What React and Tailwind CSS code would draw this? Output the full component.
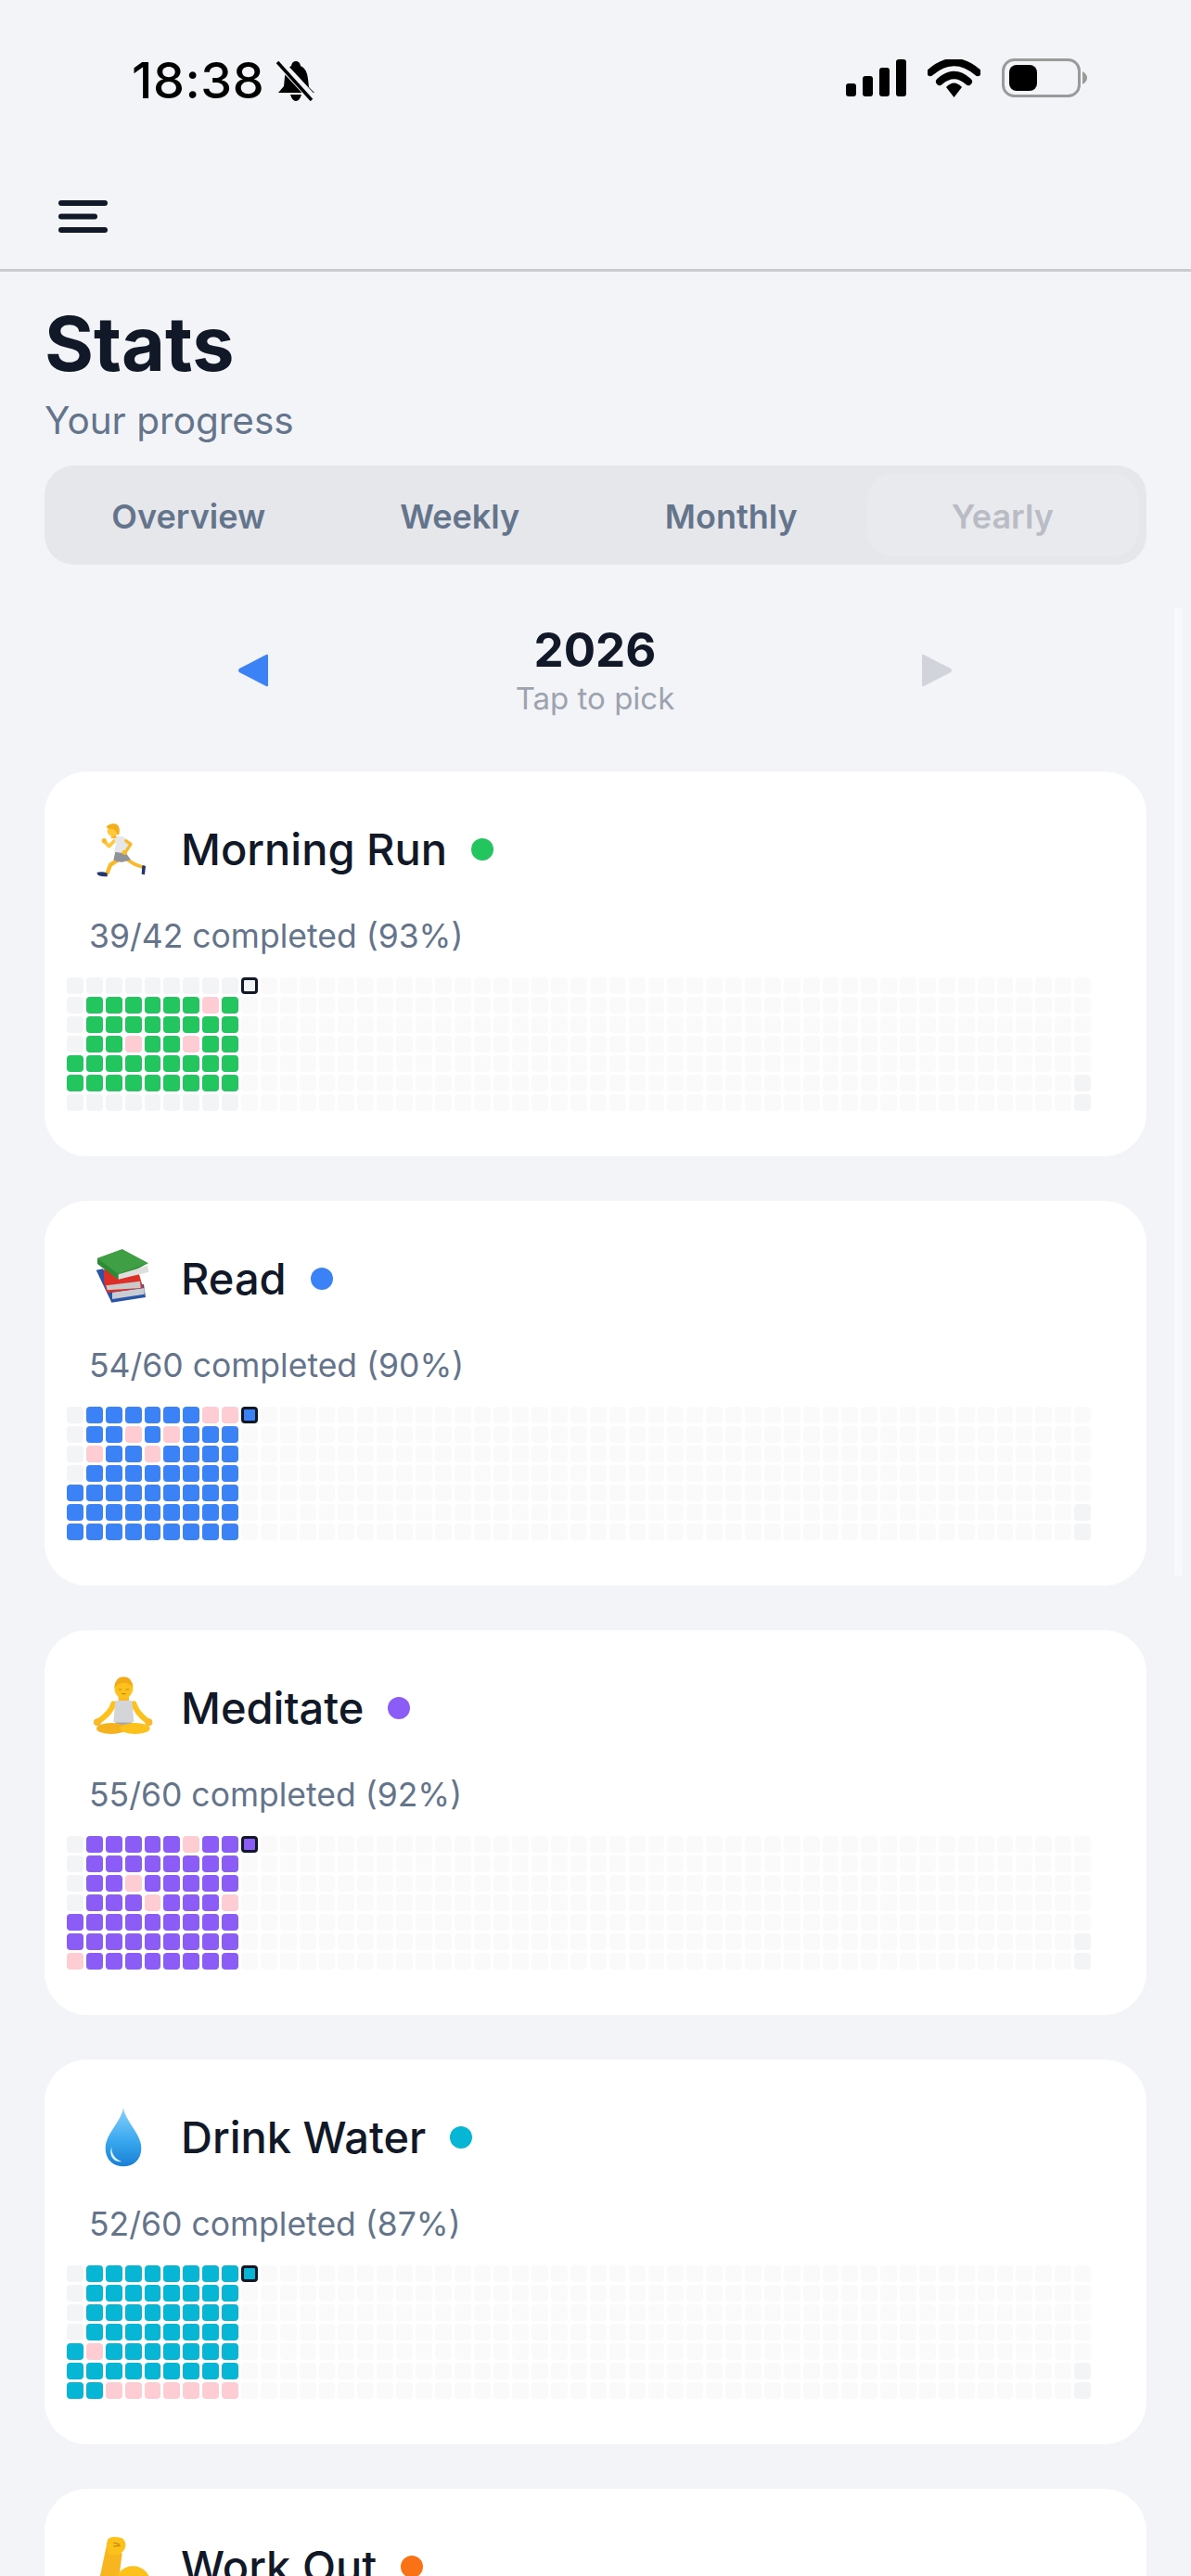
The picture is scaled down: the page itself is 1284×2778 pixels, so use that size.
import React from "react";

const RunnerEmoji = () => (
  <svg width="85" height="70" viewBox="0 0 255 210" className="block shrink-0 overflow-visible">
    <path d="M125 155 L102 170 L92 196" fill="none" stroke="#f9b92a" strokeWidth="13" strokeLinecap="round" strokeLinejoin="round" />
    <path d="M155 152 L180 168 L203 176" fill="none" stroke="#f9b92a" strokeWidth="11" strokeLinecap="round" strokeLinejoin="round" />
    <path d="M58 195 Q75 190 92 197 L92 208 Q72 208 62 203 Z" fill="#24356f" />
    <path d="M205 172 Q212 170 216 175 L213 202 L203 200 Z" fill="#24356f" />
    <path d="M122 84 L98 110 L82 94" fill="none" stroke="#ffc83d" strokeWidth="11" strokeLinecap="round" strokeLinejoin="round" />
    <circle cx="82" cy="92" r="8" fill="#f9b92a" />
    <path d="M112 82 Q128 72 146 80 L166 100 L152 122 L152 136 L114 130 L120 100 Z" fill="#e6e7e9" />
    <path d="M118 128 L154 134 L168 154 L140 161 L124 160 L112 154 Z" fill="#8f9297" />
    <path d="M152 92 L168 103 L150 130" fill="none" stroke="#f9b92a" strokeWidth="10" strokeLinecap="round" strokeLinejoin="round" />
    <circle cx="148" cy="130" r="8" fill="#f9b92a" />
    <rect x="104" y="62" width="17" height="22" fill="#f9b92a" />
    <ellipse cx="108" cy="60" rx="16" ry="17" fill="#ffc83d" />
    <path d="M88 48 Q100 34 122 38 Q136 48 130 72 L122 72 Q122 58 108 54 Q96 54 88 48 Z" fill="#f5ae1b" />
  </svg>
);

const BooksEmoji = () => (
  <svg width="85" height="70" viewBox="0 0 255 210" className="block shrink-0 overflow-visible">
    <path d="M56 92 L78 88 L112 150 L210 138 L216 180 L106 197 Z" fill="#2a54a8" />
    <path d="M108 164 L212 150 L212 170 L108 186 Z" fill="#c9ccd2" />
    <path d="M80 90 L195 106 L208 150 L92 166 L82 135 Z" fill="#dc2f27" />
    <path d="M88 142 L198 128 L200 150 L92 157 Z" fill="#c9c9c9" />
    <path d="M60 54 L140 25 L224 70 L126 122 L60 72 Z" fill="#2f8a36" />
    <path d="M60 54 L140 25 L224 70 L128 104 Z" fill="#3f9f44" />
    <path d="M128 106 L222 78 L226 98 L128 122 Z" fill="#dededc" />
  </svg>
);

const MeditateEmoji = () => (
  <svg width="85" height="70" viewBox="0 0 255 210" className="block shrink-0 overflow-visible">
    <g transform="translate(0 6)">
      <path d="M112 100 Q104 130 62 158" fill="none" stroke="#fcc21b" strokeWidth="18" strokeLinecap="round" />
      <path d="M178 100 Q186 130 224 158" fill="none" stroke="#fcc21b" strokeWidth="18" strokeLinecap="round" />
      <circle cx="60" cy="160" r="12" fill="#f9b92a" />
      <circle cx="226" cy="160" r="12" fill="#f9b92a" />
      <rect x="128" y="66" width="34" height="30" fill="#f9b92a" />
      <path d="M118 90 L172 90 L178 160 L112 160 Z" fill="#d4d5d8" />
      <path d="M118 160 L172 160 L172 176 L118 176 Z" fill="#a5a7ab" />
      <ellipse cx="105" cy="180" rx="48" ry="18" fill="#f5b11e" />
      <ellipse cx="182" cy="180" rx="48" ry="18" fill="#fcc21b" />
      <ellipse cx="145" cy="50" rx="30" ry="33" fill="#fcc21b" />
      <path d="M115 48 Q116 14 145 13 Q174 14 175 48 Q166 34 148 32 Q128 32 115 48 Z" fill="#f2ab17" />
      <path d="M128 54 H138 M152 54 H162" stroke="#9a6a10" strokeWidth="2" />
      <path d="M140 68 H150" stroke="#b27a14" strokeWidth="3" strokeLinecap="round" />
    </g>
  </svg>
);

const WaterEmoji = () => (
  <svg width="85" height="70" viewBox="0 0 255 210" className="block shrink-0 overflow-visible">
    <defs>
      <linearGradient id="dropFill" x1="0" y1="0" x2="0" y2="1">
        <stop offset="0" stopColor="#8ad2fa" />
        <stop offset="0.55" stopColor="#3aa9ef" />
        <stop offset="1" stopColor="#1a7fd6" />
      </linearGradient>
    </defs>
    <path d="M144 24 C150 68 202 108 202 155 C202 192 176 214 144 214 C112 214 86 192 86 155 C86 108 138 68 144 24 Z" fill="url(#dropFill)" />
    <path d="M106 150 C104 175 120 192 138 198 C118 202 94 182 106 150 Z" fill="#e2f5ff" />
  </svg>
);

const ArmEmoji = () => (
  <svg width="85" height="70" viewBox="0 0 255 210" className="block shrink-0 overflow-visible">
    <path d="M92 40 L140 78 L128 170 L56 210 Z" fill="#f7b51f" />
    <circle cx="175" cy="176" r="58" fill="#fcc21b" />
    <path d="M94 30 Q112 18 140 28 Q152 36 151 52 Q150 66 138 74 Q116 90 94 76 Q86 52 94 30 Z" fill="#fcc21b" />
    <path d="M112 42 L132 48 M112 54 L134 52" stroke="#b9770f" strokeWidth="3" />
  </svg>
);

const done = {
  green: "bg-[#22c55e]",
  blue: "bg-[#3b82f6]",
  violet: "bg-[#8b5cf6]",
  cyan: "bg-[#06b6d4]",
};

const habits = [
  {
    name: "Morning Run",
    Emoji: RunnerEmoji,
    dot: "bg-[#22c55e]",
    color: "green",
    stat: "39/42 completed (93%)",
    rows: [
      "........." + "T",
      ".xxxxxxpx",
      ".xxxxxxxx",
      ".xxpxxpxx",
      "xxxxxxxxx",
      "xxxxxxxxx",
      ".........",
    ],
    todayDone: false,
  },
  {
    name: "Read",
    Emoji: BooksEmoji,
    dot: "bg-[#3b82f6]",
    color: "blue",
    stat: "54/60 completed (90%)",
    rows: [
      ".xxxxxxpp" + "T",
      ".xxpxpxxx",
      ".pxxpxxxx",
      ".xxxxxxxx",
      "xxxxxxxxx",
      "xxxxxxxxx",
      "xxxxxxxxx",
    ],
    todayDone: true,
  },
  {
    name: "Meditate",
    Emoji: MeditateEmoji,
    dot: "bg-[#8b5cf6]",
    color: "violet",
    stat: "55/60 completed (92%)",
    rows: [
      ".xxxxxpxx" + "T",
      ".xxxxxxxx",
      ".xxpxxxxx",
      ".xxxpxxxp",
      "xxxxxxxxx",
      "xxxxxxxxx",
      "pxxxxxxxx",
    ],
    todayDone: true,
  },
  {
    name: "Drink Water",
    Emoji: WaterEmoji,
    dot: "bg-[#06b6d4]",
    color: "cyan",
    stat: "52/60 completed (87%)",
    rows: [
      ".xxxxxxxx" + "T",
      ".xxxxxxxx",
      ".xxxxxxxx",
      ".xxxxxxxx",
      "xpxxxxxxx",
      "xxxxxxxxx",
      "xxppppppp",
    ],
    todayDone: true,
  },
  {
    name: "Work Out",
    Emoji: ArmEmoji,
    dot: "bg-[#f97316]",
    color: "green",
    stat: "",
    rows: [],
    todayDone: false,
  },
];

function cellClass(habit, col, row) {
  const ch = habit.rows[row]?.[col];
  if (ch === "T") {
    return habit.todayDone
      ? `${done[habit.color]} border-[3px] border-[#111827]`
      : "bg-[#f3f4f6] border-[3px] border-[#111827]";
  }
  if (ch === "x") return done[habit.color];
  if (ch === "p") return "bg-[#fecdd3]";
  if (ch === ".") return "bg-[#f3f4f6]";
  if (col === 52 && row >= 5) return "bg-[#f3f4f6]";
  return "bg-[#fafafa]";
}

function Heatmap({ habit }) {
  const cells = [];
  for (let col = 0; col < 53; col++) {
    for (let row = 0; row < 7; row++) {
      cells.push(
        <div key={col + "-" + row} className={"h-[18px] rounded-[4px] " + cellClass(habit, col, row)} />
      );
    }
  }
  return (
    <div className="mt-[22px] ml-[24px] w-[1104px] grid grid-flow-col grid-rows-7 grid-cols-[repeat(53,minmax(0,1fr))] gap-[3px]">
      {cells}
    </div>
  );
}

function HabitCard({ habit }) {
  const { Emoji } = habit;
  return (
    <div className="bg-white rounded-[46px] pt-[44px] pb-[49px]">
      <div className="flex items-center h-[70px] ml-[37px]">
        <Emoji />
        <span className="ml-[25px] pt-[10px] text-[47px] leading-[60px] font-[550] text-[#111827]">{habit.name}</span>
        <span className={"ml-[26px] mt-[10px] w-[24px] h-[24px] rounded-full " + habit.dot} />
      </div>
      <div className="mt-[42px] ml-[48px] text-[35.5px] leading-[44px] text-[#64748b]">{habit.stat}</div>
      <Heatmap habit={habit} />
    </div>
  );
}

const StatusIcons = () => (
  <div className="flex items-center">
    <svg width="65" height="40" viewBox="0 0 65 40" className="block">
      <rect x="0" y="26" width="11" height="14" rx="3" fill="#000" />
      <rect x="18" y="18" width="11" height="22" rx="3" fill="#000" />
      <rect x="36" y="9" width="11" height="31" rx="3" fill="#000" />
      <rect x="54" y="0" width="11" height="40" rx="3" fill="#000" />
    </svg>
    <svg width="57" height="41" viewBox="0 0 57 41" className="block ml-[23px]">
      <path d="M3 14 Q28.5 -8 54 14" fill="none" stroke="#000" strokeWidth="8" strokeLinecap="round" />
      <path d="M13 24 Q28.5 10 44 24" fill="none" stroke="#000" strokeWidth="8" strokeLinecap="round" />
      <path d="M20 30 Q28.5 21 37 30 L28.5 41 Z" fill="#000" />
    </svg>
    <svg width="92" height="42" viewBox="0 0 92 42" className="block ml-[23px]">
      <rect x="1.5" y="1.5" width="82" height="39" rx="12" fill="none" stroke="#9a9a9a" strokeWidth="3" />
      <rect x="8" y="7" width="30" height="28" rx="8" fill="#000" />
      <path d="M87 14 Q92 17 92 21 Q92 25 87 28 Z" fill="#9a9a9a" />
    </svg>
  </div>
);

const BellSlash = () => (
  <svg width="43" height="44" viewBox="0 0 43 44" className="block ml-[13px]">
    <path d="M21 1 Q25 1 26 6 Q33 9 34 20 L35 29 L41 35 L2 35 L8 28 L9 18 Q10 9 16 6 Q17 1 21 1 Z" fill="#000" />
    <path d="M15 37 H27 Q25 44 21 44 Q17 44 15 37 Z" fill="#000" />
    <path d="M2 1 L41 43" stroke="#f3f4f8" strokeWidth="9" />
    <path d="M1 2 L38 43" stroke="#000" strokeWidth="3.5" />
  </svg>
);

const Tab = ({ label, active }) => (
  <div
    className={
      "flex-1 flex items-center justify-center pt-[3px] rounded-[27px] text-[36px] font-semibold " +
      (active ? "bg-[#e9eaed] text-[#b9bcc4]" : "text-[#64748b]")
    }
  >
    {label}
  </div>
);

export default function App() {
  return (
    <div className="relative w-[1284px] h-[2778px] overflow-hidden bg-[#f3f4f8] font-['Inter',sans-serif]">
      <div className="h-[175px] pt-[63px] pl-[142px] pr-[112px] flex items-start justify-between">
        <div className="flex items-center h-[48px]">
          <span className="text-[54px] leading-[48px] font-medium tracking-[0.5px] text-black">18:38</span>
          <BellSlash />
        </div>
        <StatusIcons />
      </div>
      <div className="h-[118px] pl-[63px] pt-[2px] flex items-center border-b-[3px] border-[#c9cbd0]">
        <svg width="53" height="35" viewBox="0 0 53 35" className="block">
          <rect x="0" y="0" width="53" height="6" rx="3" fill="#111827" />
          <rect x="0" y="14.5" width="42" height="6" rx="3" fill="#111827" />
          <rect x="0" y="29" width="53" height="6" rx="3" fill="#111827" />
        </svg>
      </div>

      <div className="px-[48px]">
        <div className="pt-[28px] text-[81px] leading-[100px] font-bold text-[#111827]">Stats</div>
        <div className="mt-[8px] text-[40.5px] leading-[50px] text-[#64748b]">Your progress</div>

        <div className="mt-[23px] h-[107px] p-[9px] flex rounded-[32px] bg-[#e5e7eb]">
          <Tab label="Overview" />
          <Tab label="Weekly" />
          <Tab label="Monthly" />
          <Tab label="Yearly" active />
        </div>

        <div className="mt-[62px] h-[104px] pl-[208px] pr-[209px] flex items-center justify-between">
          <svg width="34" height="36" viewBox="0 0 34 36" className="block">
            <path d="M33 2 Q33 0 31 1 L2 16 Q0 18 2 20 L31 35 Q33 36 33 34 Z" fill="#3b82f6" />
          </svg>
          <div className="flex flex-col items-center">
            <div className="text-[51px] leading-[60px] font-bold text-[#111827]">2026</div>
            <div className="text-[33px] leading-[44px] text-[#9ca3af]">Tap to pick</div>
          </div>
          <svg width="34" height="36" viewBox="0 0 34 36" className="block">
            <path d="M1 2 Q1 0 3 1 L32 16 Q34 18 32 20 L3 35 Q1 36 1 34 Z" fill="#d1d5db" />
          </svg>
        </div>

        <div className="mt-[57px] flex flex-col gap-[48px]">
          {habits.map((h) => (
            <HabitCard key={h.name} habit={h} />
          ))}
        </div>
      </div>

      <div className="absolute left-[1266px] top-[655px] w-[9px] h-[1045px] rounded-full bg-[#f8f9fb]" />
    </div>
  );
}
